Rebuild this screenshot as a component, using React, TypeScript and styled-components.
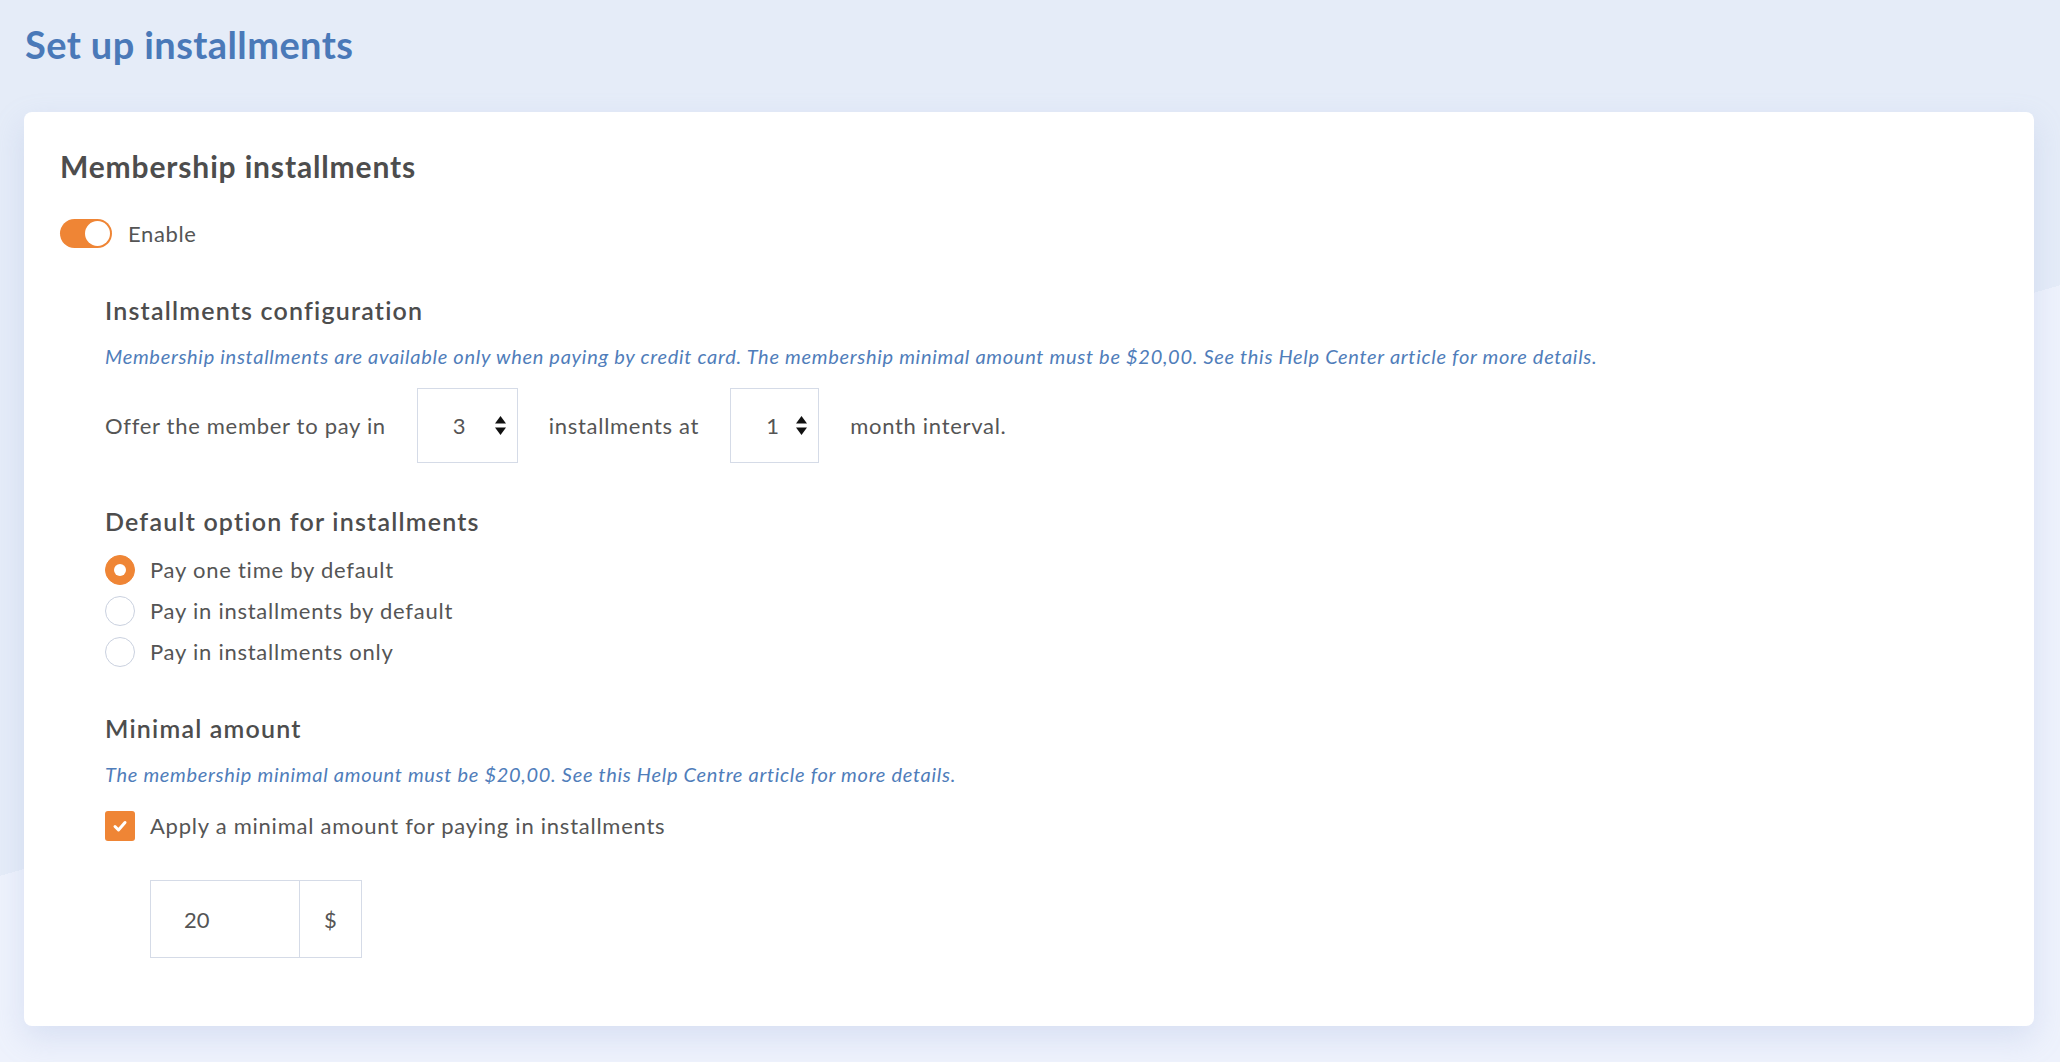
import React from "react"
import styled, { createGlobalStyle } from "styled-components"

const GlobalStyle = createGlobalStyle`
  html, body {
    margin: 0;
    min-height: 100%;
  }

  body {
    min-height: 100vh;
    font-family: Lato, "Liberation Sans", sans-serif;
    color: #555;
    background: linear-gradient(164deg, #e5ecf8 53%, #eef2fc 53%);
  }
`

const orange = "#ef8535"
const line = "#d5dbe7"

const Page = styled.div`
  padding: 0 26px 36px 24px;
`

const PageTitle = styled.h1`
  margin: 22px 0 46px 1px;
  font-size: 38px;
  line-height: 44px;
  letter-spacing: 0.4px;
  font-weight: 700;
  color: #4a79b8;
`

const Card = styled.section`
  background-color: #fff;
  border-radius: 8px;
  padding: 37px 36px 68px;
  box-shadow: 0 12px 30px rgba(150, 172, 220, 0.25);
`

const CardTitle = styled.h2`
  margin: 0 0 36px;
  font-size: 30px;
  line-height: 34px;
  letter-spacing: 0.85px;
  font-weight: 700;
  color: #4d4d4d;
`

const ToggleRow = styled.label`
  display: flex;
  align-items: center;
  gap: 16px;
  font-size: 22px;
  letter-spacing: 0.65px;
  color: #555;
`

const Track = styled.span<{ $on: boolean }>`
  display: flex;
  justify-content: ${(p) => (p.$on ? "flex-end" : "flex-start")};
  box-sizing: border-box;
  width: 52px;
  height: 29px;
  padding: 2px;
  border-radius: 15px;
  background-color: ${(p) => (p.$on ? orange : "#ccd3e0")};
`

const Knob = styled.span`
  width: 25px;
  height: 25px;
  border-radius: 50%;
  background-color: #fff;
`

const Settings = styled.div`
  padding-left: 45px;
`

const Section = styled.div<{ $gap: number }>`
  margin-top: ${(p) => p.$gap}px;
`

const SectionTitle = styled.h3`
  margin: 0 0 20px;
  font-size: 25px;
  line-height: 28px;
  letter-spacing: 1.2px;
  font-weight: 600;
  color: #4d4d4d;
`

const Help = styled.p`
  margin: 0 0 20px;
  font-size: 20px;
  line-height: 24px;
  letter-spacing: 0.7px;
  font-style: italic;
  color: #4f7dba;
`

const SentenceRow = styled.div`
  display: flex;
  align-items: center;
  gap: 31px;
  font-size: 22px;
  letter-spacing: 0.7px;
`

const NumberBox = styled.div<{ $width: number }>`
  display: flex;
  align-items: center;
  justify-content: space-between;
  box-sizing: border-box;
  width: ${(p) => p.$width}px;
  height: 75px;
  padding: 0 11px 0 35px;
  border: 1px solid ${line};
  font-size: 22px;
  color: #555;
`

const Options = styled.div`
  display: flex;
  flex-direction: column;
  gap: 11px;
`

const Choice = styled.label`
  display: flex;
  align-items: center;
  gap: 15px;
  font-size: 22px;
  line-height: 30px;
  letter-spacing: 0.75px;
  color: #555;
`

const Radio = styled.span<{ $checked: boolean }>`
  display: flex;
  align-items: center;
  justify-content: center;
  box-sizing: border-box;
  width: 30px;
  height: 30px;
  border-radius: 50%;
  border: 1px solid ${(p) => (p.$checked ? orange : "#cad1df")};
  background-color: ${(p) => (p.$checked ? orange : "#fff")};

  &::after {
    content: "";
    display: ${(p) => (p.$checked ? "block" : "none")};
    width: 12px;
    height: 12px;
    border-radius: 50%;
    background-color: #fff;
  }
`

const Checkbox = styled.span`
  display: flex;
  align-items: center;
  justify-content: center;
  width: 30px;
  height: 30px;
  border-radius: 3px;
  background-color: ${orange};
`

const CheckRow = styled(Choice)`
  margin-top: 25px;
`

const AmountGroup = styled.div`
  display: flex;
  margin: 39px 0 0 45px;
  height: 76px;
  width: fit-content;
  border: 1px solid ${line};
  font-size: 22px;
  color: #555;
`

const AmountValue = styled.div`
  display: flex;
  align-items: center;
  width: 149px;
  padding-left: 33px;
  box-sizing: border-box;
  border-right: 1px solid ${line};
`

const AmountUnit = styled.div`
  display: flex;
  align-items: center;
  justify-content: center;
  width: 61px;
`

const Spinner = () => (
  <svg width="11" height="19" viewBox="0 0 11 19">
    <path d="M5.5 0 L11 7.5 H0 Z" fill="#111" />
    <path d="M5.5 19 L11 11.5 H0 Z" fill="#111" />
  </svg>
)

const Check = () => (
  <svg width="16" height="16" viewBox="0 0 16 16">
    <path
      d="M3 8.5 L6.5 12 L13 4.5"
      fill="none"
      stroke="#fff"
      strokeWidth="3"
      strokeLinecap="round"
      strokeLinejoin="round"
    />
  </svg>
)

const defaults = [
  "Pay one time by default",
  "Pay in installments by default",
  "Pay in installments only",
]

const App = () => {
  return (
    <Page>
      <GlobalStyle />
      <PageTitle>Set up installments</PageTitle>
      <Card>
        <CardTitle>Membership installments</CardTitle>
        <ToggleRow>
          <Track $on={true}>
            <Knob />
          </Track>
          Enable
        </ToggleRow>

        <Settings>
          <Section $gap={48}>
            <SectionTitle>Installments configuration</SectionTitle>
            <Help>
              Membership installments are available only when paying by credit
              card. The membership minimal amount must be $20,00. See this Help
              Center article for more details.
            </Help>
            <SentenceRow>
              <span>Offer the member to pay in</span>
              <NumberBox $width={101}>
                3 <Spinner />
              </NumberBox>
              <span>installments at</span>
              <NumberBox $width={89}>
                1 <Spinner />
              </NumberBox>
              <span>month interval.</span>
            </SentenceRow>
          </Section>

          <Section $gap={44}>
            <SectionTitle>Default option for installments</SectionTitle>
            <Options>
              {defaults.map((label, i) => (
                <Choice key={label}>
                  <Radio $checked={i === 0} />
                  {label}
                </Choice>
              ))}
            </Options>
          </Section>

          <Section $gap={47}>
            <SectionTitle>Minimal amount</SectionTitle>
            <Help>
              The membership minimal amount must be $20,00. See this Help Centre
              article for more details.
            </Help>
            <CheckRow>
              <Checkbox>
                <Check />
              </Checkbox>
              Apply a minimal amount for paying in installments
            </CheckRow>
            <AmountGroup>
              <AmountValue>20</AmountValue>
              <AmountUnit>$</AmountUnit>
            </AmountGroup>
          </Section>
        </Settings>
      </Card>
    </Page>
  )
}

export default App
